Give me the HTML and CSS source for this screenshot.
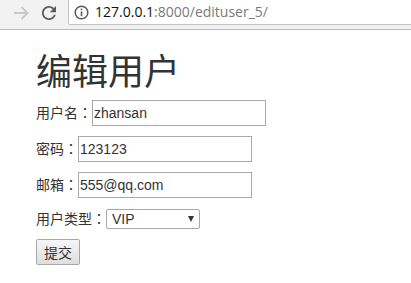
FILE: index.html
```html
<!DOCTYPE html>
<html lang="zh-CN">
<head>
<meta charset="utf-8">
<title>编辑用户</title>
<link rel="stylesheet" href="styles.css">
</head>
<body>
<div class="toolbar">
  <div class="nav">
    <svg class="ico-fwd" width="16" height="14" viewBox="0 0 16 14">
      <path d="M1 7 H14.5 M8.5 1 L14.5 7 L8.5 13" fill="none" stroke="#c8c8c8" stroke-width="1.8"/>
    </svg>
    <svg class="ico-reload" width="14" height="14" viewBox="4 4 16 16">
      <path fill="#5a5a5a" d="M17.65 6.35C16.2 4.9 14.21 4 12 4c-4.42 0-7.99 3.58-7.99 8s3.57 8 7.99 8c3.73 0 6.84-2.55 7.730-6h-2.08c-.82 2.33-3.04 4-5.65 4-3.310 0-6-2.690-6-6s2.69-6 6-6c1.66 0 3.14.69 4.22 1.78L13 11h7V4l-2.35 2.35z"/>
    </svg>
  </div>
  <div class="omnibox">
    <svg class="ico-info" width="15" height="15" viewBox="0 0 15 15">
      <circle cx="7.5" cy="7.5" r="6.3" fill="none" stroke="#5a5a5a" stroke-width="1.5"/>
      <rect x="6.7" y="6.4" width="1.6" height="4.8" fill="#5a5a5a"/>
      <rect x="6.7" y="3.6" width="1.6" height="1.6" fill="#5a5a5a"/>
    </svg>
    <span class="url"><span class="host">127.0.0.1</span><span class="path">:8000/edituser_5/</span></span>
  </div>
</div>
<div class="page">
  <h1>编辑用户</h1>
  <form class="form">
    <p class="row"><label>用户名<span class="colon">：</span></label><input class="field" type="text" value="zhansan"></p>
    <p class="row"><label>密码<span class="colon">：</span></label><input class="field" type="text" value="123123"></p>
    <p class="row"><label>邮箱<span class="colon">：</span></label><input class="field" type="text" value="555@qq.com"></p>
    <p class="row"><label>用户类型<span class="colon">：</span></label><span class="select-wrap"><select class="select"><option>VIP</option></select></span></p>
    <p class="row"><button class="btn" type="button">提交</button></p>
  </form>
</div>
</body>
</html>
```
FILE: styles.css
```css
html, body {
  margin: 0;
  padding: 0;
  background: #fff;
}
body {
  font-family: "Liberation Sans", "Noto Sans CJK SC", sans-serif;
  font-size: 14px;
  line-height: 20px;
  color: #333;
}
.toolbar {
  height: 29px;
  background: #f2f2f2;
  border-bottom: 1px solid #b9b9b9;
  display: flex;
  align-items: flex-start;
}
.nav {
  width: 68px;
  height: 25px;
  display: flex;
  align-items: center;
}
.ico-fwd {
  margin-left: 13px;
}
.ico-reload {
  margin-left: 13px;
}
.omnibox {
  flex: 1;
  height: 24px;
  background: #fff;
  border-left: 1px solid #c3c3c3;
  border-bottom: 1px solid #c3c3c3;
  border-bottom-left-radius: 2px;
  display: flex;
  align-items: center;
}
.ico-info {
  margin-left: 5px;
  margin-top: 1px;
}
.url {
  margin-left: 6px;
  font-family: "Open Sans", "Noto Sans", sans-serif;
  font-size: 14px;
}
.host { color: #111; }
.path { color: #7a7a7a; }
.page {
  padding-left: 36px;
}
h1 {
  margin: 20px 0 10px;
  font-family: "Noto Sans CJK SC", sans-serif;
  font-size: 36px;
  font-weight: 400;
  line-height: 1.1;
  color: #333;
}
.form { margin: 0; }
.row {
  margin: 0 0 10px;
}
.row label {
  font-family: "Noto Sans CJK SC", sans-serif;
}
.colon {
  font-family: "Noto Sans CJK TC", sans-serif;
  font-feature-settings: "locl" 0;
}
.field {
  box-sizing: border-box;
  width: 174px;
  height: 26px;
  margin: 0;
  padding: 0 1px;
  border: 1px solid #a9a9a9;
  font: inherit;
  color: #333;
  background: #fff;
  vertical-align: baseline;
}
.select-wrap {
  position: relative;
  display: inline-block;
}
.select {
  -webkit-appearance: none;
  appearance: none;
  box-sizing: border-box;
  width: 94px;
  height: 20px;
  margin: 0;
  padding: 0 0 0 5px;
  border: 1px solid #a9a9a9;
  border-radius: 2px;
  background: #fff;
  font: inherit;
  line-height: 18px;
  color: #333;
  display: block;
}
.select-wrap::after {
  content: "";
  position: absolute;
  right: 6px;
  top: 7px;
  width: 0;
  height: 0;
  border-left: 3.5px solid transparent;
  border-right: 3.5px solid transparent;
  border-top: 6px solid #333;
  pointer-events: none;
}
.btn {
  box-sizing: border-box;
  height: 26px;
  width: 44px;
  padding: 2px 0;
  margin: 0;
  border: 1px solid #a6a6a6;
  border-radius: 2px;
  background: linear-gradient(#f6f6f6, #dedede);
  font-family: "Noto Sans CJK SC", sans-serif;
  font-size: 14px;
  line-height: 20px;
  color: #333;
}
```
